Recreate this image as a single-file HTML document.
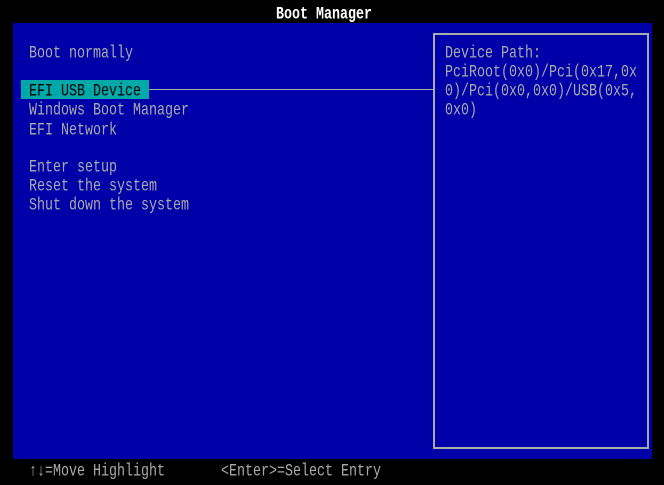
<!DOCTYPE html>
<html><head><style>
html,body{margin:0;padding:0}
body{width:664px;height:485px;background:#000;position:relative;overflow:hidden;font-family:"Liberation Mono",monospace;}
.t{position:absolute;font-size:13.33px;line-height:14px;height:14px;color:#aaa;white-space:pre;transform:scaleY(1.3);transform-origin:0 50%;}
#panel{position:absolute;left:13px;top:23px;width:639px;height:436px;background:#0000a8;}
#box{position:absolute;left:433px;top:33px;height:416px;border:2px solid #aaa;box-sizing:border-box;width:216px;}
#hl{position:absolute;left:21px;top:80px;width:128px;height:19px;background:#00a8a8;}
#line{position:absolute;left:149px;top:89px;width:284px;height:1px;background:#aaa;}
</style></head><body>
<div class="t" style="left:276px;top:9px;color:#fff;font-weight:bold;">Boot Manager</div>
<div id="panel"></div>
<div id="box"></div>
<div id="hl"></div>
<div id="line"></div>
<div class="t" style="left:29px;top:48px">Boot normally</div>
<div class="t" style="left:29px;top:86px;color:#000">EFI USB Device</div>
<div class="t" style="left:29px;top:105px">Windows Boot Manager</div>
<div class="t" style="left:29px;top:125px">EFI Network</div>
<div class="t" style="left:29px;top:162px">Enter setup</div>
<div class="t" style="left:29px;top:181px">Reset the system</div>
<div class="t" style="left:29px;top:200px">Shut down the system</div>
<div class="t" style="left:445px;top:48px">Device Path:</div>
<div class="t" style="left:445px;top:67px">PciRoot(0x0)/Pci(0x17,0x</div>
<div class="t" style="left:445px;top:86px">0)/Pci(0x0,0x0)/USB(0x5,</div>
<div class="t" style="left:445px;top:105px">0x0)</div>
<div class="t" style="left:29px;top:466px">↑↓=Move Highlight</div>
<div class="t" style="left:221px;top:466px">&lt;Enter&gt;=Select Entry</div>
</body></html>
